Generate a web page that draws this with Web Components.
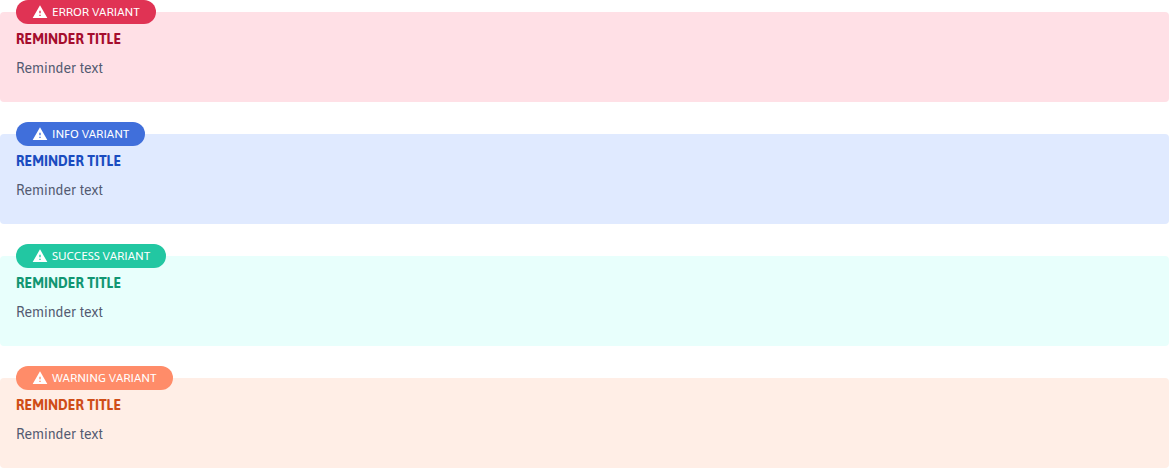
<!DOCTYPE html>
<html lang="en">
<head>
<meta charset="utf-8">
<title>Reminders</title>
<style>
  body { margin: 0; background: #fff; font-family: Asap, "Noto Sans", sans-serif; }
</style>
</head>
<body>
<reminder-list>
  <reminder-card variant="error"><span slot="badge">ERROR VARIANT</span><span slot="title">REMINDER TITLE</span>Reminder text</reminder-card>
  <reminder-card variant="info"><span slot="badge">INFO VARIANT</span><span slot="title">REMINDER TITLE</span>Reminder text</reminder-card>
  <reminder-card variant="success"><span slot="badge">SUCCESS VARIANT</span><span slot="title">REMINDER TITLE</span>Reminder text</reminder-card>
  <reminder-card variant="warning"><span slot="badge">WARNING VARIANT</span><span slot="title">REMINDER TITLE</span>Reminder text</reminder-card>
</reminder-list>

<template id="list-template">
  <style>
    :host { display: flex; flex-direction: column; gap: 32px; padding-top: 12px; }
  </style>
  <slot></slot>
</template>

<template id="badge-template">
  <style>
    :host {
      display: inline-flex; align-items: center; gap: 4px;
      height: 24px; padding: 0 16px; border-radius: 12px;
      box-sizing: border-box; color: #fff;
      font-size: 12px; line-height: 24px; white-space: nowrap;
    }
    svg { width: 16px; height: 16px; flex: none; fill: currentColor; }
  </style>
  <svg viewBox="0 0 24 24" aria-hidden="true"><path d="M1 21h22L12 2 1 21zm12-3h-2v-2h2v2zm0-4h-2v-4h2v4z"/></svg>
  <slot></slot>
</template>

<template id="card-template">
  <style>
    :host {
      --strong: #e03354; --title: #a50d2d; --tint: #ffe0e6;
      display: flex; flex-direction: column; align-items: flex-start;
      padding: 0 16px 23px; border-radius: 4px; background: var(--tint);
    }
    :host([variant="info"]) { --strong: #406fdb; --title: #1a4cc0; --tint: #e0eaff; }
    :host([variant="success"]) { --strong: #22c7a2; --title: #119672; --tint: #e8fffc; }
    :host([variant="warning"]) { --strong: #ff8c69; --title: #cf4d17; --tint: #ffeee6; }
    reminder-badge { margin-top: -12px; background: var(--strong); }
    h2 { margin: 5px 0 8px; font-size: 14px; line-height: 21px; font-weight: 700; color: var(--title); }
    p { margin: 0; font-size: 14px; line-height: 21px; color: #525970; }
  </style>
  <reminder-badge><slot name="badge"></slot></reminder-badge>
  <h2><slot name="title"></slot></h2>
  <p><slot></slot></p>
</template>

<script>
  function define(name, templateId) {
    customElements.define(name, class extends HTMLElement {
      constructor() {
        super();
        const template = document.getElementById(templateId);
        this.attachShadow({ mode: "open" }).append(template.content.cloneNode(true));
      }
    });
  }
  define("reminder-list", "list-template");
  define("reminder-badge", "badge-template");
  define("reminder-card", "card-template");
</script>
</body>
</html>
